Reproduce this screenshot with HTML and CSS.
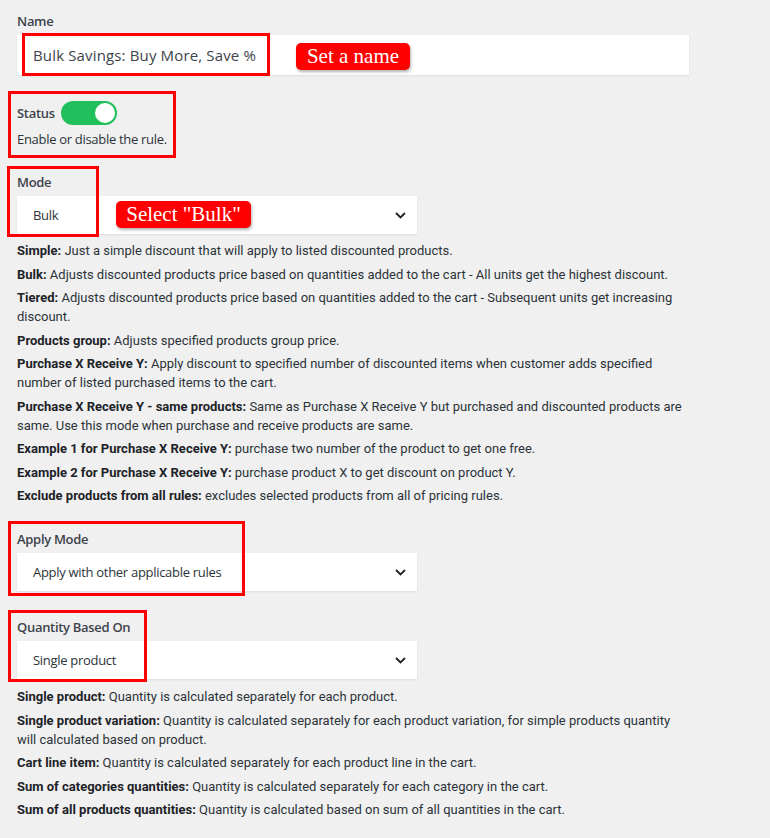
FILE: index.html
```html
<!DOCTYPE html>
<html>
<head>
<meta charset="utf-8">
<link rel="stylesheet" href="styles.css">
</head>
<body>
<div class="page">
  <div class="field f-name">
    <div class="label">Name</div>
    <div class="input">Bulk Savings: Buy More, Save %</div>
    <div class="frame frame-name"></div>
    <div class="badge badge-name">Set a name</div>
  </div>

  <div class="field f-status">
    <div class="status-row">
      <span class="label">Status</span>
      <span class="toggle"><span class="knob"></span></span>
    </div>
    <div class="help">Enable or disable the rule.</div>
    <div class="frame frame-status"></div>
  </div>

  <div class="field f-mode">
    <div class="label">Mode</div>
    <div class="select"><span>Bulk</span>
      <svg class="chev" width="11" height="7" viewBox="0 0 11 7"><polyline points="1,1 5.5,5.5 10,1" fill="none" stroke="#1d2327" stroke-width="1.8"/></svg>
    </div>
    <div class="frame frame-mode"></div>
    <div class="badge badge-mode">Select "Bulk"</div>
  </div>

  <div class="desc desc-mode">
    <p><b>Simple:</b> Just a simple discount that will apply to listed discounted products.</p>
    <p><b>Bulk:</b> Adjusts discounted products price based on quantities added to the cart - All units get the highest discount.</p>
    <p><b>Tiered:</b> Adjusts discounted products price based on quantities added to the cart - Subsequent units get increasing discount.</p>
    <p><b>Products group:</b> Adjusts specified products group price.</p>
    <p><b>Purchase X Receive Y:</b> Apply discount to specified number of discounted items when customer adds specified number of listed purchased items to the cart.</p>
    <p><b>Purchase X Receive Y - same products:</b> Same as Purchase X Receive Y but purchased and discounted products are same. Use this mode when purchase and receive products are same.</p>
    <p><b>Example 1 for Purchase X Receive Y:</b> purchase two number of the product to get one free.</p>
    <p><b>Example 2 for Purchase X Receive Y:</b> purchase product X to get discount on product Y.</p>
    <p><b>Exclude products from all rules:</b> excludes selected products from all of pricing rules.</p>
  </div>

  <div class="field f-apply">
    <div class="label">Apply Mode</div>
    <div class="select"><span>Apply with other applicable rules</span>
      <svg class="chev" width="11" height="7" viewBox="0 0 11 7"><polyline points="1,1 5.5,5.5 10,1" fill="none" stroke="#1d2327" stroke-width="1.8"/></svg>
    </div>
    <div class="frame frame-apply"></div>
  </div>

  <div class="field f-qty">
    <div class="label">Quantity Based On</div>
    <div class="select"><span>Single product</span>
      <svg class="chev" width="11" height="7" viewBox="0 0 11 7"><polyline points="1,1 5.5,5.5 10,1" fill="none" stroke="#1d2327" stroke-width="1.8"/></svg>
    </div>
    <div class="frame frame-qty"></div>
  </div>

  <div class="desc desc-qty">
    <p><b>Single product:</b> Quantity is calculated separately for each product.</p>
    <p><b>Single product variation:</b> Quantity is calculated separately for each product variation, for simple products quantity will calculated based on product.</p>
    <p><b>Cart line item:</b> Quantity is calculated separately for each product line in the cart.</p>
    <p><b>Sum of categories quantities:</b> Quantity is calculated separately for each category in the cart.</p>
    <p><b>Sum of all products quantities:</b> Quantity is calculated based on sum of all quantities in the cart.</p>
  </div>
</div>
</body>
</html>
```
FILE: styles.css
```css
html, body {
  margin: 0;
  padding: 0;
  background: #f0f0f1;
}
.page {
  padding: 12px 81px 30px 17px;
  font-family: "Open Sans", "Noto Sans", sans-serif;
  color: #2c3338;
  width: 672px;
}
.field {
  position: relative;
}
.label {
  font-size: 13px;
  line-height: 18px;
  font-weight: 600;
  color: #3c434a;
  letter-spacing: -0.3px;
}
.input {
  margin-top: 5px;
  height: 40px;
  background: #fff;
  box-shadow: 0 1px 2px rgba(0,0,0,0.08);
  display: flex;
  align-items: center;
  padding-left: 16px;
  font-size: 15px;
  color: #3c434a;
  letter-spacing: 0.15px;
}
.f-status {
  margin-top: 26px;
}
.status-row {
  display: flex;
  align-items: center;
  gap: 6px;
  height: 24px;
}
.toggle {
  width: 56px;
  height: 24px;
  border-radius: 12px;
  background: #22c05d;
  display: flex;
  align-items: center;
  justify-content: flex-end;
  padding-right: 2px;
  box-sizing: border-box;
}
.knob {
  width: 20px;
  height: 20px;
  border-radius: 50%;
  background: #fff;
}
.help {
  margin-top: 5px;
  font-size: 13px;
  line-height: 18px;
  color: #2c3338;
  letter-spacing: -0.3px;
}
.f-mode {
  margin-top: 25px;
}
.select {
  margin-top: 5px;
  width: 400px;
  height: 38px;
  background: #fff;
  box-shadow: 0 1px 2px rgba(0,0,0,0.08);
  display: flex;
  align-items: center;
  justify-content: space-between;
  padding: 0 11px 0 16px;
  box-sizing: border-box;
  font-size: 13px;
  color: #2c3338;
  letter-spacing: -0.3px;
}
.chev {
  display: block;
}
.desc {
  font-family: Roboto, "Liberation Sans", sans-serif;
  font-size: 13px;
  line-height: 19px;
  color: #2c3338;
  letter-spacing: 0;
}
.desc p {
  margin: 0 0 4.5px 0;
}
.desc b {
  font-weight: 700;
  color: #1d2327;
}
.desc-mode {
  margin-top: 7px;
}
.f-apply {
  margin-top: 25px;
}
.f-qty {
  margin-top: 27px;
}
.desc-qty {
  margin-top: 8px;
}
.frame {
  position: absolute;
  border: 3px solid #f00;
  box-sizing: border-box;
  pointer-events: none;
}
.frame-name { left: 5px; top: 21px; width: 248px; height: 43px; }
.frame-status { left: -9px; top: -10px; width: 168px; height: 67px; }
.frame-mode { left: -10px; top: -7px; width: 92px; height: 71px; }
.frame-apply { left: -9px; top: -9px; width: 237px; height: 75px; }
.frame-qty { left: -9px; top: -8px; width: 139px; height: 72px; }
.badge {
  position: absolute;
  background: #f00;
  color: #fff;
  font-family: "Liberation Serif", "Times New Roman", serif;
  font-size: 21px;
  line-height: 27px;
  height: 27px;
  border-radius: 5px;
  box-shadow: 1px 2px 3px rgba(0,0,0,0.3);
  padding: 0;
  box-sizing: border-box;
  text-align: center;
}
.badge-name { left: 279px; top: 31px; width: 114px; }
.badge-mode { left: 99px; top: 28px; width: 135px; }
```
